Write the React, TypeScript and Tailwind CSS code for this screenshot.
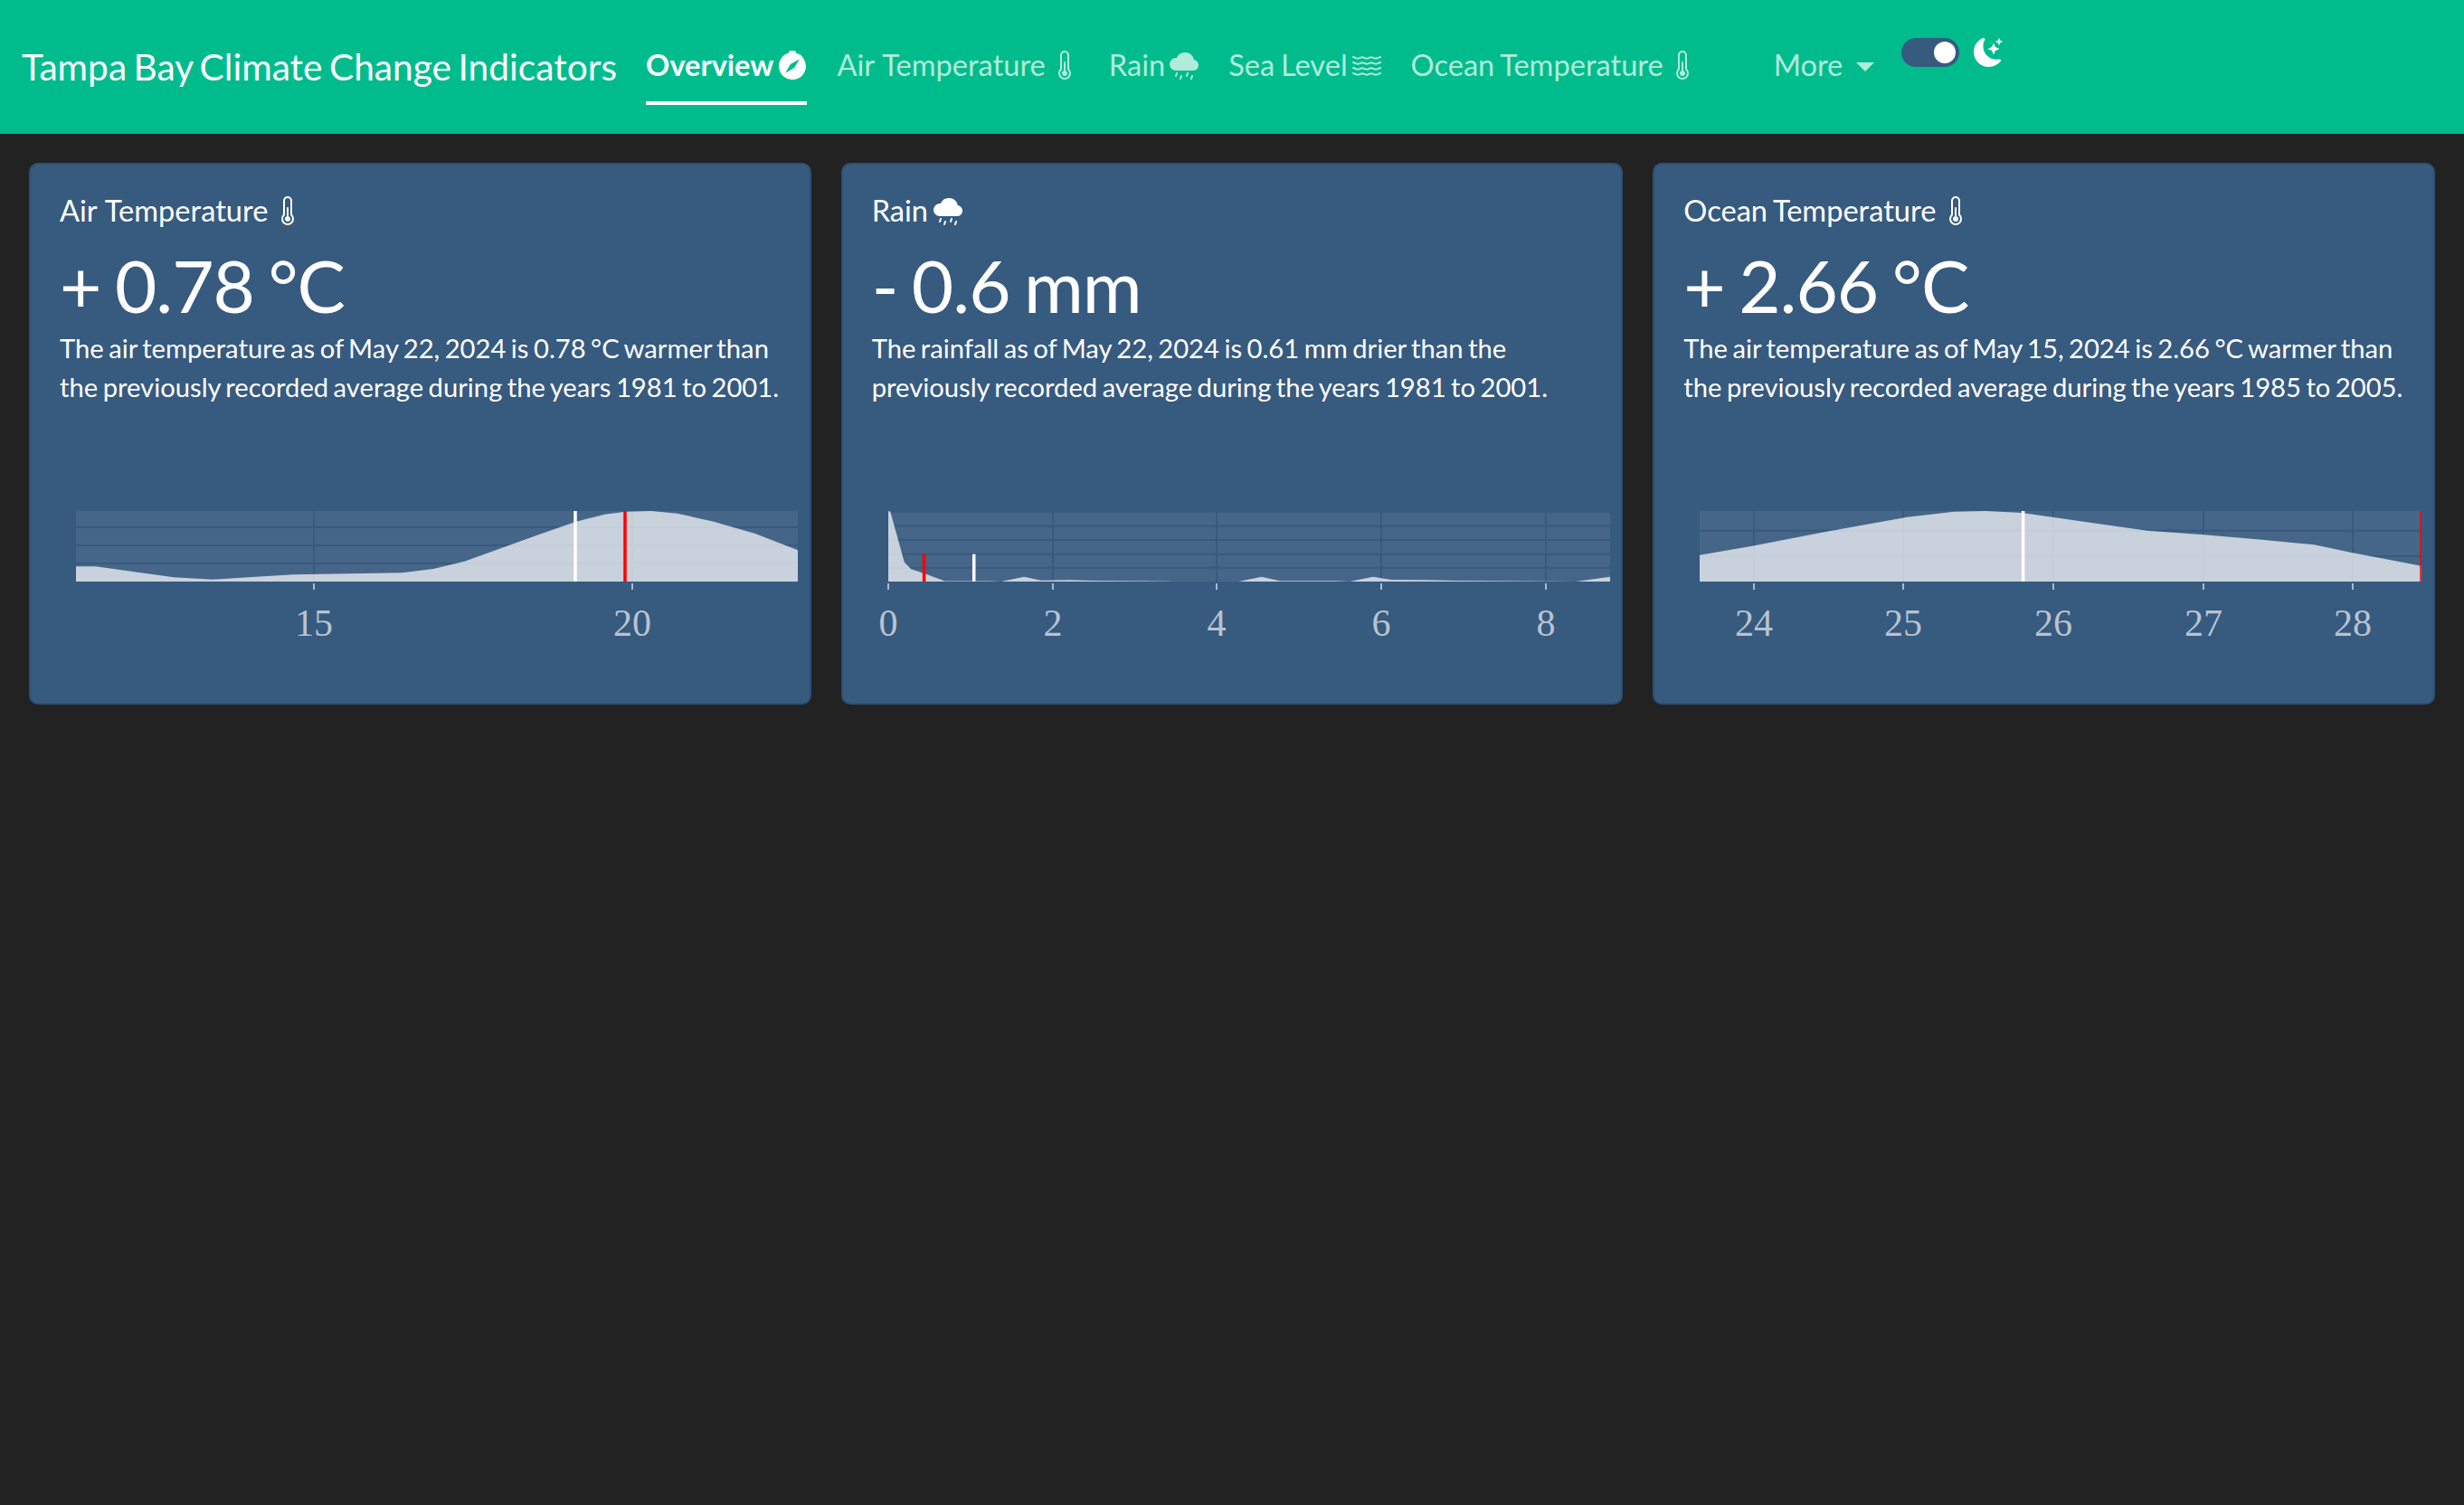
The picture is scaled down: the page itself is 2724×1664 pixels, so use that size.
import React from "react";
import { BsCompassFill, BsThermometerHalf, BsCloudDrizzleFill, BsWater, BsMoonStarsFill } from "react-icons/bs";

type Pt = [number, number];

interface ChartProps {
  area: Pt[];
  gridY: number[];
  ticks: { x: number; label: string }[];
  white: number;
  red: number;
  markerTop?: number;
  redWidth?: number;
}

const W = 798;
const H = 78;

const Chart = ({ area, gridY, ticks, white, red, markerTop = 0, redWidth = 3.5 }: ChartProps) => {
  const poly = [[0, H] as Pt, ...area, [W, H] as Pt].map((p) => p.join(",")).join(" ");
  return (
    <svg width="864" height="155" viewBox="-50 0 864 155" className="block shrink-0 -mx-[32px] mt-[116px]">
      <rect x="0" y="0" width={W} height={H} fill="#fff" fillOpacity="0.08" />
      {gridY.map((y) => (
        <line key={y} x1="0" x2={W} y1={y} y2={y} stroke="#375a7f" strokeWidth="2" />
      ))}
      {ticks.map((t) => (
        <line key={t.x} x1={t.x} x2={t.x} y1="0" y2={H} stroke="#375a7f" strokeWidth="2" />
      ))}
      <polygon points={poly} fill="#fff" fillOpacity="0.7" />
      <rect x={white - 1.75} y={markerTop} width="3.5" height={H - markerTop} fill="#fff" />
      <rect x={red - redWidth / 2} y={markerTop} width={redWidth} height={H - markerTop} fill="#f00" />
      {ticks.map((t) => (
        <g key={t.label}>
          <line x1={t.x} x2={t.x} y1="80" y2="87" stroke="#d3dae3" strokeWidth="1.5" />
          <text x={t.x} y="138" textAnchor="middle" className="font-['Liberation_Serif',serif] text-[42px] fill-[#b9c3d0]">
            {t.label}
          </text>
        </g>
      ))}
    </svg>
  );
};

const airArea: Pt[] = [
  [0, 61.3], [21.8, 61.3], [108, 73.3], [151, 75.7], [240, 70.3], [360.5, 68.3], [395, 64], [429.4, 55.7],
  [509.8, 26.7], [552.8, 11.7], [584.4, 3.7], [607.3, 0.7], [636, 0], [664.8, 2.7], [705, 11.7], [750.9, 25], [798, 43.3],
];

const rainArea: Pt[] = [
  [0, 0], [2.3, 0.7], [10.9, 31.7], [17.8, 56.7], [25.3, 64.3], [42.5, 70], [62.6, 77.5], [112, 77.5], [124.6, 78],
  [150.4, 72.7], [168.8, 76.7], [200.3, 76.3], [226, 77], [309.4, 77.7], [315, 78], [387, 78], [412.7, 72.7], [432.8, 77.3],
  [493, 77.3], [510, 78], [536, 72.7], [556, 76], [593.6, 76.3], [628, 77], [731, 77.7], [760, 78], [798, 72.7],
];

const oceanArea: Pt[] = [
  [0, 48.7], [56.5, 39], [143, 22.3], [229.5, 6.7], [281.4, 0.7], [316, 0], [356.4, 2], [431.4, 12.7], [494.8, 21.7],
  [558, 26.3], [621.7, 31.7], [679.4, 37.3], [719.7, 45.7], [798, 60.7],
];

const Card = ({ title, icon, value, text, chart, wide }: { title: string; icon: React.ReactNode; value: string; text: string; chart: React.ReactNode; wide?: boolean }) => (
  <div className="w-[864.67px] h-[599px] shrink-0 flex flex-col bg-[#375a7f] border-2 border-[#2f4f72] rounded-[10px] px-[32px] pt-[32px] overflow-hidden text-white">
    <div className="flex items-center gap-[6px] text-[32.6px] leading-[37px]">
      <span className={wide ? "[word-spacing:1.5px]" : "[word-spacing:-1.5px]"}>{title}</span>
      {icon}
    </div>
    <div className="mt-[17px] text-[80px] leading-[95px] tracking-[-1px] [word-spacing:-4px]">{value}</div>
    <p className="-mr-[8px] text-[29.2px] leading-[43px] [word-spacing:-2px]">{text}</p>
    {chart}
  </div>
);

const NavLink = ({ label, icon, active, wide }: { label: string; icon?: React.ReactNode; active?: boolean; wide?: boolean }) => (
  <a
    className={`mt-[6px] h-[68px] pb-[16px] flex items-center gap-[5px] border-b-4 text-[32.6px] leading-[48px] ${
      active ? "border-white font-bold text-white" : "border-transparent text-[#b2ebdc]"
    }`}
  >
    <span className={wide ? "[word-spacing:1.5px]" : "[word-spacing:-1.5px]"}>{label}</span>
    {icon}
  </a>
);

export default function App() {
  return (
    <div className="min-h-[1664px] bg-[#222222] font-['Lato',sans-serif]">
      <nav className="h-[148px] bg-[#00bc8c] pl-[24px] pt-[42px] flex items-start">
        <a className="mt-[2px] mr-[32px] text-[40.7px] leading-[60px] text-white whitespace-nowrap [word-spacing:-3px]">Tampa Bay Climate Change Indicators</a>
        <div className="flex items-start gap-[33px]">
          <NavLink label="Overview" active icon={<BsCompassFill size={32} />} />
          <NavLink label="Air Temperature" wide icon={<BsThermometerHalf size={32} />} />
          <NavLink label="Rain" icon={<BsCloudDrizzleFill size={32} />} />
          <NavLink label="Sea Level" icon={<BsWater size={32} />} />
          <NavLink label="Ocean Temperature" icon={<BsThermometerHalf size={32} />} />
        </div>
        <a className="ml-[85px] mt-[6px] h-[48px] flex items-center gap-[15px] text-[32.6px] leading-[48px] text-[#b2ebdc]">
          More
          <span className="mt-[3px] border-x-[10px] border-t-[10px] border-x-transparent border-t-[#b2ebdc]" />
        </a>
        <div className="ml-[30px] w-[64px] h-[32px] rounded-full bg-[#375a7f] flex items-center justify-end pr-[4px]">
          <span className="w-[24px] h-[24px] rounded-full bg-white" />
        </div>
        <BsMoonStarsFill size={32} className="ml-[16px] text-white" />
      </nav>

      <div className="pt-[32px] pl-[32px] flex gap-[33px]">
        <Card
          title="Air Temperature"
          wide
          icon={<BsThermometerHalf size={32} />}
          value="+ 0.78 °C"
          text="The air temperature as of May 22, 2024 is 0.78 °C warmer than the previously recorded average during the years 1981 to 2001."
          chart={
            <Chart
              area={airArea}
              gridY={[18, 38, 58]}
              ticks={[
                { x: 263, label: "15" },
                { x: 615, label: "20" },
              ]}
              white={552}
              red={607}
            />
          }
        />
        <Card
          title="Rain"
          icon={<BsCloudDrizzleFill size={32} />}
          value="- 0.6 mm"
          text="The rainfall as of May 22, 2024 is 0.61 mm drier than the previously recorded average during the years 1981 to 2001."
          chart={
            <Chart
              area={rainArea}
              gridY={[0.7, 16.7, 32, 47.7, 62.7]}
              ticks={[
                { x: 0, label: "0" },
                { x: 182, label: "2" },
                { x: 363, label: "4" },
                { x: 545, label: "6" },
                { x: 727, label: "8" },
              ]}
              white={94.7}
              red={39.6}
              markerTop={47.7}
            />
          }
        />
        <Card
          title="Ocean Temperature"
          icon={<BsThermometerHalf size={32} />}
          value="+ 2.66 °C"
          text="The air temperature as of May 15, 2024 is 2.66 °C warmer than the previously recorded average during the years 1985 to 2005."
          chart={
            <Chart
              area={oceanArea}
              gridY={[21.7, 50]}
              ticks={[
                { x: 60, label: "24" },
                { x: 225, label: "25" },
                { x: 391, label: "26" },
                { x: 557, label: "27" },
                { x: 722, label: "28" },
              ]}
              white={357.6}
              red={797}
              redWidth={1.5}
            />
          }
        />
      </div>
    </div>
  );
}
